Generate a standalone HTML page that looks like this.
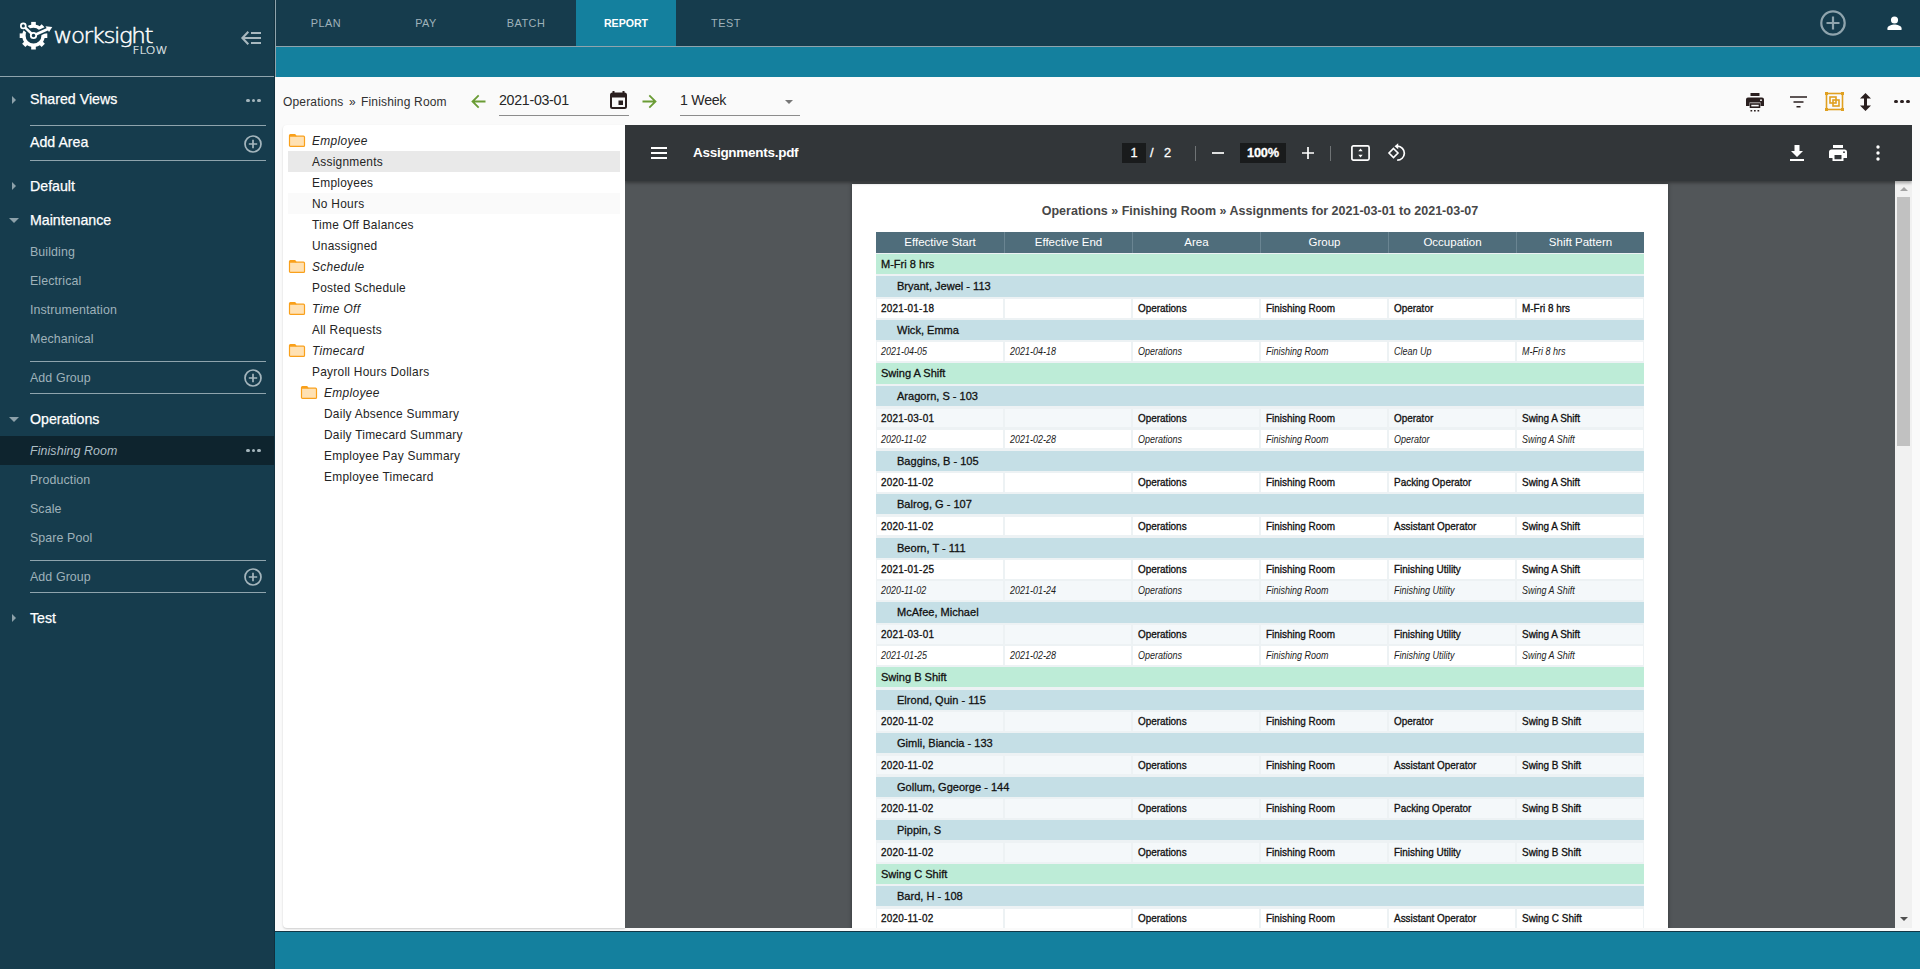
<!DOCTYPE html>
<html lang="en">
<head>
<meta charset="utf-8">
<title>Worksight Flow - Report</title>
<style>
*{box-sizing:border-box;margin:0;padding:0}
html,body{width:1920px;height:969px;overflow:hidden}
body{position:relative;background:#fafafa;font-family:"Liberation Sans",Arial,sans-serif;color:#222;-webkit-font-smoothing:antialiased}
.abs{position:absolute}
svg{display:block;position:absolute;overflow:visible}

/* ---------- sidebar ---------- */
#side{position:absolute;left:0;top:0;width:275px;height:969px;background:#163c4d}
#sideedge{position:absolute;left:275px;top:0;width:1px;height:77px;background:#8fa4ad}
#sideedge2{position:absolute;left:274px;top:0;width:1px;height:969px;background:#11303e}
#side .hr{position:absolute;left:30px;width:236px;height:1px;background:#8fa4ad}
#side .hdsep{position:absolute;left:0;top:76px;width:274px;height:1px;background:#8fa4ad}
#side .h{position:absolute;left:30px;font-size:14.2px;line-height:20px;color:#fff;white-space:nowrap;-webkit-text-stroke:.25px #fff}
#side .it{position:absolute;left:30px;font-size:12.4px;line-height:18px;color:#9fb2ba;white-space:nowrap;letter-spacing:.1px}
#side .sel{position:absolute;left:0;top:436px;width:274px;height:29px;background:#0e242e}
.tri-r{position:absolute;width:0;height:0;margin:.5px 0 0 .5px;border-left:4.6px solid #8da1aa;border-top:4.5px solid transparent;border-bottom:4.5px solid transparent}
.tri-d{position:absolute;width:0;height:0;border-top:5px solid #8da1aa;border-left:5px solid transparent;border-right:5px solid transparent}
.dots{position:absolute;width:15px;height:3.6px}
.dots i{position:absolute;top:0;width:3.6px;height:3.6px;border-radius:50%;background:#a5b6bd}
.dots i:nth-child(1){left:0}.dots i:nth-child(2){left:5.4px}.dots i:nth-child(3){left:10.8px}

/* ---------- top ---------- */
#top{position:absolute;left:276px;top:0;width:1644px;height:46px;background:#163c4d}
#topline{position:absolute;left:276px;top:46px;width:1644px;height:1px;background:#8fa4ad}
#blue{position:absolute;left:276px;top:47px;width:1644px;height:30px;background:#14809e}
.tab{position:absolute;top:0;width:100px;height:46px;line-height:46px;text-align:center;font-size:10.9px;letter-spacing:.5px;color:#9fb2ba}
.tab.on{background:#14809e;color:#fff;font-weight:bold;letter-spacing:0;font-size:10.6px}
#foot{position:absolute;left:275px;top:931px;width:1645px;height:38px;background:#14809e;border-top:1px solid #123746}

/* ---------- toolbar ---------- */
.bc{position:absolute;top:93.5px;font-size:12px;letter-spacing:.17px;line-height:16px;color:#303030;white-space:nowrap}
.fld{position:absolute;top:91.3px;font-size:14.2px;letter-spacing:-.28px;line-height:18px;color:#262626;white-space:nowrap}
.ul{position:absolute;top:115px;height:1px;background:#8c8c8c}

/* ---------- tree ---------- */
#tree{position:absolute;left:283px;top:125px;width:342px;height:803px;background:#fff;border-radius:4px 0 0 4px;box-shadow:0 1px 2px rgba(0,0,0,.18)}
.t{position:absolute;font-size:11.9px;line-height:21px;height:21px;color:#242424;white-space:nowrap;letter-spacing:.27px;margin-top:1px}
.t.f{font-style:italic;letter-spacing:.36px}
.trow{position:absolute;left:5px;width:332px;height:21px}

/* ---------- pdf ---------- */
#pdf{position:absolute;left:625px;top:125px;width:1287px;height:803px;background:#525659;overflow:hidden}
#pbar{position:absolute;left:0;top:0;width:1287px;height:56px;background:#323639;box-shadow:0 2px 3px rgba(0,0,0,.35);z-index:3}
#pbar .ttl{position:absolute;left:68px;top:18px;font-size:13.5px;line-height:20px;font-weight:bold;color:#fff;letter-spacing:-.28px}
#pbar .box{position:absolute;top:18px;height:20px;background:#191b1c;color:#fff;font-size:12.8px;line-height:20px;text-align:center;-webkit-text-stroke:.3px #fff}
#pbar .tx{position:absolute;top:18px;color:#fff;font-size:12.8px;line-height:20px;-webkit-text-stroke:.3px #fff}
#pbar .sep{position:absolute;top:21px;width:1px;height:15px;background:#6f7375}
#track{position:absolute;left:1270px;top:56px;width:17px;height:747px;background:#f1f1f1;z-index:2}
#thumb{position:absolute;left:2px;top:16px;width:13px;height:249px;background:#c1c1c1}
#page{position:absolute;left:227px;top:59px;width:816px;height:1056px;background:#fff;box-shadow:0 0 4px rgba(0,0,0,.4)}
#page .title{position:absolute;left:0;top:19px;width:816px;text-align:center;font-size:12.5px;line-height:16px;font-weight:bold;color:#474747}
#thead{position:absolute;left:24px;top:48.1px;width:768px;height:20.8px;background:#4f6d7b}
#thead div{position:absolute;top:0;width:128px;height:20.8px;line-height:20.8px;text-align:center;color:#fff;font-size:11.5px;border-left:1px solid #6a8592}
#thead div:first-child{border-left:none}
.r{position:absolute;left:24px;width:768px;height:20.2px;line-height:20.2px;font-size:11.5px;color:#111;white-space:nowrap}
.r.g{background:#bdecd7}
.r.e{background:#c5dfe6}
.r span{display:inline-block;transform-origin:0 50%}
.r.g span{position:absolute;left:4.6px;transform:scaleX(.96);-webkit-text-stroke:.3px #111}
.r.e span{position:absolute;left:20.6px;transform:scaleX(.96);-webkit-text-stroke:.3px #111}
.r.d{height:18.8px;line-height:18.8px}
.r.d .c{position:absolute;top:0;height:18.8px;width:125.7px;background:#fff;padding-left:4.6px;font-size:10.7px}
.r.d .c span{transform:scaleX(.93);-webkit-text-stroke:.32px #111}
.r.d .c:nth-child(-n+2) span{letter-spacing:.25px}
.r.d.alt .c{background:#f4f8fa}
.r.d.it .c span{font-style:italic;-webkit-text-stroke:0;color:#1d1d1d;transform:scaleX(.84);letter-spacing:0}
.r.d .c:nth-child(1){left:1.2px;padding-left:3.7px}
.r.d .c:nth-child(2){left:129.2px}
.r.d .c:nth-child(3){left:257.2px}
.r.d .c:nth-child(4){left:385.2px}
.r.d .c:nth-child(5){left:513.2px}
.r.d .c:nth-child(6){left:641.2px}
</style>
</head>
<body>

<!-- ================= SIDEBAR ================= -->
<div id="side">
  <!-- logo -->
  <svg style="left:18px;top:18px" width="160" height="40" viewBox="0 0 160 40">
    <g transform="translate(15.5 17.7)" fill="#fff">
      <circle r="9.6" fill="none" stroke="#fff" stroke-width="3.4"/>
      <rect x="-2.3" y="-13.8" width="4.600" height="3.600"/>
      <rect x="-2.3" y="-13.8" width="4.600" height="3.600" transform="rotate(45)"/>
      <rect x="-2.3" y="-13.8" width="4.600" height="3.600" transform="rotate(90)"/>
      <rect x="-2.3" y="-13.8" width="4.600" height="3.600" transform="rotate(135)"/>
      <rect x="-2.3" y="-13.8" width="4.600" height="3.600" transform="rotate(180)"/>
      <rect x="-2.3" y="-13.8" width="4.600" height="3.600" transform="rotate(225)"/>
      <rect x="-2.3" y="-13.8" width="4.600" height="3.600" transform="rotate(270)"/>
      <rect x="-2.3" y="-13.8" width="4.600" height="3.600" transform="rotate(315)"/>
    </g>
    <g stroke="#163c4d" fill="#163c4d" stroke-linecap="round">
      <path d="M5.3 7.9L15.5 17.5L35 8.7" fill="none" stroke-width="5.8"/>
      <circle cx="5.3" cy="7.9" r="4.300" stroke="none"/>
      <circle cx="15.5" cy="17.5" r="4.900" stroke="none"/>
      <path d="M35.5 8.4L26.500 7.300L31 15z" stroke-width="1.500"/>
    </g>
    <g stroke="#fff" fill="none">
      <path d="M5.3 7.9L15.5 17.5L30 11" stroke-width="2.500"/>
      <circle cx="5.3" cy="7.9" r="2.450" stroke-width="1.700" fill="#163c4d"/>
      <circle cx="15.5" cy="17.5" r="2.700" stroke-width="1.800" fill="#163c4d"/>
    </g>
    <path d="M34.300 9L27.500 8.300L31 13.900z" fill="#fff"/>
    <text x="35.5" y="25.2" font-family="DejaVu Sans Light, DejaVu Sans, Liberation Sans, sans-serif" font-weight="200" font-size="20.6" letter-spacing="-1.3" fill="#fff" stroke="#fff" stroke-width=".45" textLength="98.500" lengthAdjust="spacingAndGlyphs">worksight</text>
    <text x="114.5" y="36.1" font-family="DejaVu Sans Light, DejaVu Sans, Liberation Sans, sans-serif" font-weight="200" font-size="10.2" fill="#e6ecee" stroke="#e6ecee" stroke-width=".2" textLength="35" lengthAdjust="spacingAndGlyphs">FLOW</text>
  </svg>
  <!-- collapse icon -->
  <svg style="left:241px;top:31px" width="20" height="14" viewBox="0 0 20 14">
    <g stroke="#a8b8bf" stroke-width="2" fill="none">
      <path d="M10 2H20M1.5 7H20M10 12H20"/>
      <path d="M7.3 .8L1.4 7l5.9 6.2" stroke-width="2.1"/>
    </g>
  </svg>
  <div class="hdsep"></div>

  <div class="tri-r" style="left:11px;top:95px"></div>
  <div class="h" style="top:89px">Shared Views</div>
  <div class="dots" style="left:246.3px;top:98.7px"><i></i><i></i><i></i></div>

  <div class="hr" style="top:125px"></div>
  <div class="h" style="top:132px">Add Area</div>
  <svg style="left:244.2px;top:134.5px" width="18" height="18" viewBox="0 0 18 18"><circle cx="9" cy="9" r="8" fill="none" stroke="#a5b6bd" stroke-width="1.7"/><path d="M9 4.800v8.400M4.800 9h8.400" stroke="#a5b6bd" stroke-width="1.7"/></svg>
  <div class="hr" style="top:160px"></div>

  <div class="tri-r" style="left:11px;top:181px"></div>
  <div class="h" style="top:176px">Default</div>

  <div class="tri-d" style="left:9px;top:218px"></div>
  <div class="h" style="top:210px">Maintenance</div>
  <div class="it" style="top:243px">Building</div>
  <div class="it" style="top:272px">Electrical</div>
  <div class="it" style="top:301px">Instrumentation</div>
  <div class="it" style="top:330px">Mechanical</div>
  <div class="hr" style="top:361px"></div>
  <div class="it" style="top:369px">Add Group</div>
  <svg style="left:244.2px;top:368.5px" width="18" height="18" viewBox="0 0 18 18"><circle cx="9" cy="9" r="8" fill="none" stroke="#a5b6bd" stroke-width="1.7"/><path d="M9 4.800v8.400M4.800 9h8.400" stroke="#a5b6bd" stroke-width="1.7"/></svg>
  <div class="hr" style="top:393px"></div>

  <div class="tri-d" style="left:9px;top:417px"></div>
  <div class="h" style="top:409px">Operations</div>
  <div class="sel"></div>
  <div class="it" style="top:442px;font-style:italic;color:#aebfc6">Finishing Room</div>
  <div class="dots" style="left:246.3px;top:448.7px"><i></i><i></i><i></i></div>
  <div class="it" style="top:471px">Production</div>
  <div class="it" style="top:500px">Scale</div>
  <div class="it" style="top:529px">Spare Pool</div>
  <div class="hr" style="top:560px"></div>
  <div class="it" style="top:568px">Add Group</div>
  <svg style="left:244.2px;top:567.5px" width="18" height="18" viewBox="0 0 18 18"><circle cx="9" cy="9" r="8" fill="none" stroke="#a5b6bd" stroke-width="1.7"/><path d="M9 4.800v8.400M4.800 9h8.400" stroke="#a5b6bd" stroke-width="1.7"/></svg>
  <div class="hr" style="top:592px"></div>

  <div class="tri-r" style="left:11px;top:613px"></div>
  <div class="h" style="top:608px">Test</div>
</div>
<div id="sideedge"></div>
<div id="sideedge2"></div>

<!-- ================= TOP BAR ================= -->
<div id="top">
  <div class="tab" style="left:0">PLAN</div>
  <div class="tab" style="left:100px">PAY</div>
  <div class="tab" style="left:200px">BATCH</div>
  <div class="tab on" style="left:300px">REPORT</div>
  <div class="tab" style="left:400px">TEST</div>
  <svg style="left:1544.1px;top:10px" width="26" height="26" viewBox="0 0 26 26"><circle cx="13" cy="13" r="11.700" fill="none" stroke="#8fa4ad" stroke-width="2.200"/><path d="M13 6.500v13M6.500 13h13" stroke="#8fa4ad" stroke-width="2.200"/></svg>
  <svg style="left:1611px;top:16px" width="15" height="15" viewBox="0 0 16 16"><circle cx="8" cy="4.2" r="3.8" fill="#fff"/><path d="M.5 15v-2c0-2.6 5-3.9 7.5-3.9s7.5 1.300 7.500 3.900v2z" fill="#fff"/></svg>
</div>
<div id="topline"></div>
<div id="blue"></div>

<!-- ================= TOOLBAR ================= -->
<div class="bc" style="left:283px">Operations</div>
<div class="bc" style="left:349px">»</div>
<div class="bc" style="left:361px">Finishing Room</div>
<svg style="left:471px;top:94px" width="15" height="15" viewBox="0 0 15 15"><path d="M14.500 7.500H2M7.700 1.300L1.500 7.500l6.200 6.200" fill="none" stroke="#6a9c35" stroke-width="1.8"/></svg>
<div class="fld" style="left:499px">2021-03-01</div>
<svg style="left:610px;top:91px" width="17" height="18" viewBox="0 0 17 18"><path d="M3.500 0v3M13.500 0v3" stroke="#2a1f1f" stroke-width="2"/><rect x="1" y="2.500" width="15" height="14.500" rx="1.500" fill="none" stroke="#2a1f1f" stroke-width="2"/><rect x="1" y="2.500" width="15" height="4" fill="#2a1f1f"/><rect x="8.500" y="9.500" width="4.500" height="4.500" fill="#2a1f1f"/></svg>
<div class="ul" style="left:499px;width:130px"></div>
<svg style="left:642px;top:94px" width="15" height="15" viewBox="0 0 15 15"><path d="M.5 7.500H13M7.300 1.300l6.200 6.200-6.200 6.200" fill="none" stroke="#6a9c35" stroke-width="1.8"/></svg>
<div class="fld" style="left:680px">1 Week</div>
<div class="tri-d" style="left:785px;top:100px;border-top-color:#777;border-top-width:4.500px;border-left-width:4.500px;border-right-width:4.500px"></div>
<div class="ul" style="left:680px;width:120px"></div>

<!-- right toolbar icons -->
<svg style="left:1745.6px;top:92.6px" width="19" height="20" viewBox="0 0 19 20"><g fill="#2a1f1f"><rect x="4.500" y="0" width="9" height="3"/><path d="M2 4.500h14a2 2 0 0 1 2 2V13h-3.500V9.500h-11V13H0V6.500a2 2 0 0 1 2-2z"/><rect x="4.500" y="11" width="9" height="3.200" fill="none" stroke="#2a1f1f" stroke-width="1.600"/><circle cx="15" cy="7.200" r=".9" fill="#fff"/><rect x="4.500" y="17" width="1.700" height="1.500"/><rect x="8" y="17" width="1.700" height="1.500"/><rect x="11.500" y="17" width="1.700" height="1.500"/></g></svg>
<svg style="left:1790px;top:96px" width="17" height="12" viewBox="0 0 17 12"><path d="M0 1h17M3.500 6h10M6.500 10.700h4" stroke="#2a1f1f" stroke-width="1.500"/></svg>
<svg style="left:1825px;top:92px" width="19" height="19" viewBox="0 0 19 19"><g fill="none" stroke="#e0a020" stroke-width="1.600"><rect x="1.500" y="1.500" width="16" height="16"/><rect x="5" y="5" width="6" height="6"/><rect x="8" y="8" width="6" height="6"/></g><g fill="#e0a020"><rect x="0" y="0" width="3" height="3"/><rect x="16" y="0" width="3" height="3"/><rect x="0" y="16" width="3" height="3"/><rect x="16" y="16" width="3" height="3"/></g></svg>
<svg style="left:1860px;top:93px" width="11" height="18" viewBox="0 0 11 18"><path d="M5.500 0L0 5.500h4v7H0L5.500 18 11 12.500H7v-7h4z" fill="#2a1f1f"/></svg>
<div class="dots" style="left:1894px;top:99.500px;width:16px;height:3.500px"><i style="background:#2a1f1f;width:3.500px;height:3.500px"></i><i style="background:#2a1f1f;width:3.500px;height:3.500px;left:6px"></i><i style="background:#2a1f1f;width:3.500px;height:3.500px;left:12px"></i></div>

<!-- ================= TREE ================= -->
<div id="tree">
  <div class="trow" style="top:26px;background:#e9e9e9"></div>
  <div class="trow" style="top:68px;background:#fafafa"></div>

  <svg style="left:6px;top:9px" width="16" height="13" viewBox="0 0 16 13"><path d="M1.500.6h4.300l1.500 1.600h7.200a1 1 0 0 1 1 1v8.200a1 1 0 0 1-1 1h-13a1 1 0 0 1-1-1V1.600a1 1 0 0 1 1-1z" fill="#ffe1b3" stroke="#f9a01b" stroke-width="1.200"/><path d="M.6 2.800V1.600a1 1 0 0 1 1-1h4.200l1.500 1.600v.6z" fill="#f9a01b"/></svg>
  <div class="t f" style="left:29px;top:5px">Employee</div>
  <div class="t" style="left:29px;top:26px">Assignments</div>
  <div class="t" style="left:29px;top:47px">Employees</div>
  <div class="t" style="left:29px;top:68px">No Hours</div>
  <div class="t" style="left:29px;top:89px">Time Off Balances</div>
  <div class="t" style="left:29px;top:110px">Unassigned</div>

  <svg style="left:6px;top:135px" width="16" height="13" viewBox="0 0 16 13"><path d="M1.500.6h4.300l1.500 1.600h7.200a1 1 0 0 1 1 1v8.200a1 1 0 0 1-1 1h-13a1 1 0 0 1-1-1V1.600a1 1 0 0 1 1-1z" fill="#ffe1b3" stroke="#f9a01b" stroke-width="1.200"/><path d="M.6 2.800V1.600a1 1 0 0 1 1-1h4.200l1.500 1.600v.6z" fill="#f9a01b"/></svg>
  <div class="t f" style="left:29px;top:131px">Schedule</div>
  <div class="t" style="left:29px;top:152px">Posted Schedule</div>

  <svg style="left:6px;top:177px" width="16" height="13" viewBox="0 0 16 13"><path d="M1.500.6h4.300l1.500 1.600h7.200a1 1 0 0 1 1 1v8.200a1 1 0 0 1-1 1h-13a1 1 0 0 1-1-1V1.600a1 1 0 0 1 1-1z" fill="#ffe1b3" stroke="#f9a01b" stroke-width="1.200"/><path d="M.6 2.800V1.600a1 1 0 0 1 1-1h4.200l1.500 1.600v.6z" fill="#f9a01b"/></svg>
  <div class="t f" style="left:29px;top:173px">Time Off</div>
  <div class="t" style="left:29px;top:194px">All Requests</div>

  <svg style="left:6px;top:219px" width="16" height="13" viewBox="0 0 16 13"><path d="M1.500.6h4.300l1.500 1.600h7.200a1 1 0 0 1 1 1v8.200a1 1 0 0 1-1 1h-13a1 1 0 0 1-1-1V1.600a1 1 0 0 1 1-1z" fill="#ffe1b3" stroke="#f9a01b" stroke-width="1.200"/><path d="M.6 2.800V1.600a1 1 0 0 1 1-1h4.200l1.500 1.600v.6z" fill="#f9a01b"/></svg>
  <div class="t f" style="left:29px;top:215px">Timecard</div>
  <div class="t" style="left:29px;top:236px">Payroll Hours Dollars</div>

  <svg style="left:18px;top:261px" width="16" height="13" viewBox="0 0 16 13"><path d="M1.500.6h4.300l1.500 1.600h7.200a1 1 0 0 1 1 1v8.200a1 1 0 0 1-1 1h-13a1 1 0 0 1-1-1V1.600a1 1 0 0 1 1-1z" fill="#ffe1b3" stroke="#f9a01b" stroke-width="1.200"/><path d="M.6 2.800V1.600a1 1 0 0 1 1-1h4.200l1.500 1.600v.6z" fill="#f9a01b"/></svg>
  <div class="t f" style="left:41px;top:257px">Employee</div>
  <div class="t" style="left:41px;top:278px">Daily Absence Summary</div>
  <div class="t" style="left:41px;top:299px">Daily Timecard Summary</div>
  <div class="t" style="left:41px;top:320px">Employee Pay Summary</div>
  <div class="t" style="left:41px;top:341px">Employee Timecard</div>
</div>

<!-- ================= PDF VIEWER ================= -->
<div id="pdf">
  <div id="page">
    <div class="title">Operations » Finishing Room » Assignments for 2021-03-01 to 2021-03-07</div>
    <div id="thead">
      <div style="left:0">Effective Start</div>
      <div style="left:128px">Effective End</div>
      <div style="left:256px">Area</div>
      <div style="left:384px">Group</div>
      <div style="left:512px">Occupation</div>
      <div style="left:640px">Shift Pattern</div>
    </div>
<div style="position:absolute;left:24px;top:69px;width:768px;height:990px;background:#edf2f4"></div>
<div class="r g" style="top:69.8px"><span>M-Fri 8 hrs</span></div>
<div class="r e" style="top:92.32px"><span>Bryant, Jewel - 113</span></div>
<div class="r d" style="top:114.84px"><div class="c"><span>2021-01-18</span></div><div class="c"></div><div class="c"><span>Operations</span></div><div class="c"><span>Finishing Room</span></div><div class="c"><span>Operator</span></div><div class="c"><span>M-Fri 8 hrs</span></div></div>
<div class="r e" style="top:135.89px"><span>Wick, Emma</span></div>
<div class="r d it" style="top:158.41px"><div class="c"><span>2021-04-05</span></div><div class="c"><span>2021-04-18</span></div><div class="c"><span>Operations</span></div><div class="c"><span>Finishing Room</span></div><div class="c"><span>Clean Up</span></div><div class="c"><span>M-Fri 8 hrs</span></div></div>
<div class="r g" style="top:179.46px"><span>Swing A Shift</span></div>
<div class="r e" style="top:201.98px"><span>Aragorn, S - 103</span></div>
<div class="r d alt" style="top:224.5px"><div class="c"><span>2021-03-01</span></div><div class="c"></div><div class="c"><span>Operations</span></div><div class="c"><span>Finishing Room</span></div><div class="c"><span>Operator</span></div><div class="c"><span>Swing A Shift</span></div></div>
<div class="r d it" style="top:245.55px"><div class="c"><span>2020-11-02</span></div><div class="c"><span>2021-02-28</span></div><div class="c"><span>Operations</span></div><div class="c"><span>Finishing Room</span></div><div class="c"><span>Operator</span></div><div class="c"><span>Swing A Shift</span></div></div>
<div class="r e" style="top:266.6px"><span>Baggins, B - 105</span></div>
<div class="r d" style="top:289.12px"><div class="c"><span>2020-11-02</span></div><div class="c"></div><div class="c"><span>Operations</span></div><div class="c"><span>Finishing Room</span></div><div class="c"><span>Packing Operator</span></div><div class="c"><span>Swing A Shift</span></div></div>
<div class="r e" style="top:310.17px"><span>Balrog, G - 107</span></div>
<div class="r d" style="top:332.69px"><div class="c"><span>2020-11-02</span></div><div class="c"></div><div class="c"><span>Operations</span></div><div class="c"><span>Finishing Room</span></div><div class="c"><span>Assistant Operator</span></div><div class="c"><span>Swing A Shift</span></div></div>
<div class="r e" style="top:353.74px"><span>Beorn, T - 111</span></div>
<div class="r d" style="top:376.26px"><div class="c"><span>2021-01-25</span></div><div class="c"></div><div class="c"><span>Operations</span></div><div class="c"><span>Finishing Room</span></div><div class="c"><span>Finishing Utility</span></div><div class="c"><span>Swing A Shift</span></div></div>
<div class="r d it alt" style="top:397.31px"><div class="c"><span>2020-11-02</span></div><div class="c"><span>2021-01-24</span></div><div class="c"><span>Operations</span></div><div class="c"><span>Finishing Room</span></div><div class="c"><span>Finishing Utility</span></div><div class="c"><span>Swing A Shift</span></div></div>
<div class="r e" style="top:418.36px"><span>McAfee, Michael</span></div>
<div class="r d alt" style="top:440.88px"><div class="c"><span>2021-03-01</span></div><div class="c"></div><div class="c"><span>Operations</span></div><div class="c"><span>Finishing Room</span></div><div class="c"><span>Finishing Utility</span></div><div class="c"><span>Swing A Shift</span></div></div>
<div class="r d it" style="top:461.93px"><div class="c"><span>2021-01-25</span></div><div class="c"><span>2021-02-28</span></div><div class="c"><span>Operations</span></div><div class="c"><span>Finishing Room</span></div><div class="c"><span>Finishing Utility</span></div><div class="c"><span>Swing A Shift</span></div></div>
<div class="r g" style="top:482.98px"><span>Swing B Shift</span></div>
<div class="r e" style="top:505.5px"><span>Elrond, Quin - 115</span></div>
<div class="r d alt" style="top:528.02px"><div class="c"><span>2020-11-02</span></div><div class="c"></div><div class="c"><span>Operations</span></div><div class="c"><span>Finishing Room</span></div><div class="c"><span>Operator</span></div><div class="c"><span>Swing B Shift</span></div></div>
<div class="r e" style="top:549.07px"><span>Gimli, Biancia - 133</span></div>
<div class="r d alt" style="top:571.59px"><div class="c"><span>2020-11-02</span></div><div class="c"></div><div class="c"><span>Operations</span></div><div class="c"><span>Finishing Room</span></div><div class="c"><span>Assistant Operator</span></div><div class="c"><span>Swing B Shift</span></div></div>
<div class="r e" style="top:592.64px"><span>Gollum, Ggeorge - 144</span></div>
<div class="r d alt" style="top:615.16px"><div class="c"><span>2020-11-02</span></div><div class="c"></div><div class="c"><span>Operations</span></div><div class="c"><span>Finishing Room</span></div><div class="c"><span>Packing Operator</span></div><div class="c"><span>Swing B Shift</span></div></div>
<div class="r e" style="top:636.21px"><span>Pippin, S</span></div>
<div class="r d alt" style="top:658.73px"><div class="c"><span>2020-11-02</span></div><div class="c"></div><div class="c"><span>Operations</span></div><div class="c"><span>Finishing Room</span></div><div class="c"><span>Finishing Utility</span></div><div class="c"><span>Swing B Shift</span></div></div>
<div class="r g" style="top:679.78px"><span>Swing C Shift</span></div>
<div class="r e" style="top:702.3px"><span>Bard, H - 108</span></div>
<div class="r d" style="top:724.82px"><div class="c"><span>2020-11-02</span></div><div class="c"></div><div class="c"><span>Operations</span></div><div class="c"><span>Finishing Room</span></div><div class="c"><span>Assistant Operator</span></div><div class="c"><span>Swing C Shift</span></div></div>
  </div>

  <div id="track">
    <div id="thumb"></div>
    <div class="tri-d" style="left:4.500px;top:6px;border-top:none;border-bottom:4px solid #a3a3a3;border-left-width:4px;border-right-width:4px"></div>
    <div class="tri-d" style="left:4.500px;top:736px;border-top:4px solid #505050;border-left-width:4px;border-right-width:4px"></div>
  </div>

  <div id="pbar">
    <svg style="left:26px;top:22px" width="16" height="12" viewBox="0 0 16 12"><path d="M0 1h16M0 6h16M0 11h16" stroke="#fff" stroke-width="1.800"/></svg>
    <div class="ttl">Assignments.pdf</div>
    <div class="box" style="left:497px;width:24px">1</div>
    <div class="tx" style="left:525px">/</div>
    <div class="tx" style="left:539px">2</div>
    <div class="sep" style="left:570px"></div>
    <svg style="left:587px;top:27px" width="12" height="2" viewBox="0 0 12 2"><path d="M0 1h12" stroke="#fff" stroke-width="1.700"/></svg>
    <div class="box" style="left:615px;width:46px;font-weight:bold;letter-spacing:-.2px">100%</div>
    <svg style="left:677px;top:22px" width="12" height="12" viewBox="0 0 12 12"><path d="M0 6h12M6 0v12" stroke="#fff" stroke-width="1.700"/></svg>
    <div class="sep" style="left:705px"></div>
    <svg style="left:726px;top:20px" width="19" height="16" viewBox="0 0 19 16"><rect x=".9" y=".9" width="17.200" height="14.200" rx="1.500" fill="none" stroke="#fff" stroke-width="1.700"/><path d="M9.500 3.500L11.700 6.300H7.300zM9.500 12.500L11.700 9.700H7.300z" fill="#fff"/></svg>
    <svg style="left:763px;top:19px" width="18" height="18" viewBox="0 0 18 18"><path d="M5.500 4.500L10 9 5.500 13.500 1 9z" fill="none" stroke="#fff" stroke-width="1.600"/><path d="M9.500 2.200a7 7 0 1 1-.3 14" fill="none" stroke="#fff" stroke-width="1.700"/><path d="M10.200 -.8L6.500 2.300l3.700 3z" fill="#fff"/></svg>
    <svg style="left:1165px;top:20px" width="14" height="16" viewBox="0 0 14 16"><path d="M4.500 0h5v6H13L7 12 1 6h3.500zM0 14h14v2H0z" fill="#fff"/></svg>
    <svg style="left:1204px;top:20px" width="18" height="16" viewBox="0 0 18 16"><path d="M4 0h10v3H4zM2.500 4.500h13A2.500 2.500 0 0 1 18 7v6h-3.500v3h-11v-3H0V7a2.500 2.500 0 0 1 2.500-2.500zM5.500 10v4.300h7V10zM15 6.300a.9.9 0 1 0 0 1.800.9.9 0 0 0 0-1.800z" fill="#fff" fill-rule="evenodd"/></svg>
    <svg style="left:1251px;top:20px" width="4" height="16" viewBox="0 0 4 16"><circle cx="2" cy="2" r="1.700" fill="#fff"/><circle cx="2" cy="8" r="1.700" fill="#fff"/><circle cx="2" cy="14" r="1.700" fill="#fff"/></svg>
  </div>
</div>

<div id="foot"></div>
</body>
</html>
